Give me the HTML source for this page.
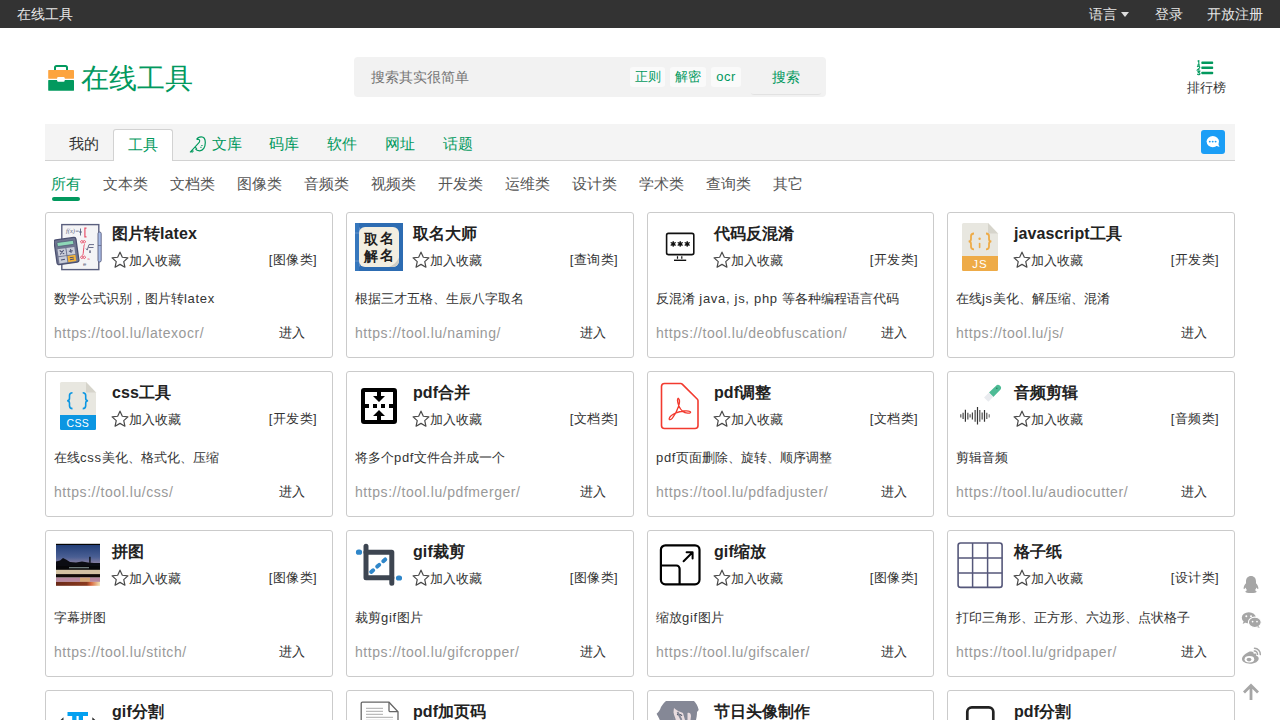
<!DOCTYPE html>
<html><head><meta charset="utf-8"><title>在线工具</title><style>
*{margin:0;padding:0;box-sizing:border-box}
html,body{width:1280px;height:720px;overflow:hidden;background:#fff}
body{font-family:"Liberation Sans",sans-serif;color:#333;position:relative}
.abs{position:absolute;white-space:nowrap}
.top{position:absolute;left:0;top:0;width:1280px;height:28px;background:#333;color:#e6e6e6;font-size:14px}
.top span{position:absolute;top:0;line-height:28px}
.caret{position:absolute;left:1121px;top:12px;width:0;height:0;border-left:4.5px solid transparent;border-right:4.5px solid transparent;border-top:5px solid #ddd}
.logo{position:absolute;left:48px;top:65px}
.logotext{position:absolute;left:81px;top:60px;font-size:28px;line-height:38px;color:#02995e;white-space:nowrap}
.search{position:absolute;left:354px;top:57px;width:472px;height:40px;background:#f2f2f2;border-radius:4px}
.ph{position:absolute;left:17px;top:0;line-height:40px;font-size:14px;color:#757575}
.tag{position:absolute;top:10px;height:20px;line-height:20px;background:#fafafa;border-radius:3px;color:#02995e;font-size:13px;text-align:center}
.sbtn{position:absolute;left:396px;top:0;width:72px;height:37px;line-height:40px;text-align:center;color:#02995e;font-size:14px;box-shadow:0 2px 1px -1px rgba(0,0,0,.07);border-radius:4px}
.rank{position:absolute;left:1186px;top:59px;width:40px;text-align:center;font-size:13px;color:#333}
.tabs{position:absolute;left:45px;top:124px;width:1190px;height:37px;background:#f4f4f4;border-bottom:1px solid #d2d2d2}
.tab{position:absolute;top:0;line-height:40px;font-size:15px;color:#02995e;white-space:nowrap}
.tab.act{top:5px;height:32px;line-height:30px;background:#fff;border:1px solid #d2d2d2;border-bottom:none;border-radius:3px 3px 0 0;width:60px;text-align:center}
.chat{position:absolute;left:1156px;top:6px;width:24px;height:24px;background:#1b9ef6;border-radius:3px}
.cats span{position:absolute;top:174px;font-size:15px;line-height:20px;color:#555;white-space:nowrap}
.uline{position:absolute;left:52px;top:197px;width:28px;height:4px;border-radius:2px;background:#02995e}
.card{position:absolute;width:288px;border:1px solid #cbcbcb;border-radius:3px;background:#fff;overflow:hidden}
.card .ic{position:absolute;left:8px;top:10px;width:48px;height:48px}
.card .ic svg{display:block}
.tt{position:absolute;left:66px;top:9px;font-size:16px;font-weight:700;line-height:24px;color:#222;white-space:nowrap}
.fav{position:absolute;left:65px;top:38px;height:20px;font-size:13px;line-height:20px;color:#333;white-space:nowrap}
.fav .star{position:absolute;left:-1px;top:-1px}
.fav span{position:absolute;left:18px;top:0}
.cat{position:absolute;right:15px;top:36px;font-size:13px;line-height:22px;color:#333;white-space:nowrap;letter-spacing:.4px}
.ds{position:absolute;left:8px;top:76px;font-size:13px;line-height:20px;color:#333;white-space:nowrap}
.url{position:absolute;left:8px;top:110px;font-size:14px;line-height:20px;color:#999;letter-spacing:.56px;white-space:nowrap}
.go{position:absolute;left:233px;top:110px;font-size:13px;line-height:20px;color:#333}
.l{letter-spacing:.1px}
.ds .l{letter-spacing:.7px}
.side{position:absolute;left:1242px;width:18px;height:18px}
</style></head>
<body>
<div class="top"><span style="left:17px">在线工具</span><span style="left:1089px">语言</span><i class="caret"></i><span style="left:1155px">登录</span><span style="left:1207px">开放注册</span></div>
<div class="logo"><svg width="26" height="26" viewBox="0 0 26 26">
<path d="M7 5V2.6A1.6 1.6 0 0 1 8.6 1h8.8A1.6 1.6 0 0 1 19 2.6V5" fill="none" stroke="#02995e" stroke-width="2"/>
<rect x="0.2" y="5" width="25.8" height="8.7" rx=".4" fill="#fda43f"/>
<rect x="0.2" y="15" width="25.8" height="10.7" rx=".4" fill="#02995e"/>
<rect x="9.1" y="12.1" width="7.6" height="4.7" rx="1.2" fill="#fff"/>
</svg></div>
<div class="logotext">在线工具</div>
<div class="search"><span class="ph">搜索其实很简单</span>
<span class="tag" style="left:276px;width:35px">正则</span>
<span class="tag" style="left:316px;width:36px">解密</span>
<span class="tag" style="left:357px;width:30px;letter-spacing:.5px">ocr</span>
<span class="sbtn">搜索</span></div>
<div class="rank"><svg width="18" height="16" viewBox="0 0 18 16" style="position:absolute;left:10px;top:1px">
<g fill="#02995e"><rect x="5.3" y="1.6" width="11.9" height="2.5" rx=".8"/><rect x="5.3" y="6.6" width="11.9" height="2.5" rx=".8"/><rect x="5.3" y="11.7" width="11.9" height="2.5" rx=".8"/></g>
<g fill="none" stroke="#02995e" stroke-width="1.1"><path d="M1.6 1.3l1.2-.6v4.4M1.3 5.1h2.6"/><path d="M1.2 6.9c.4-.8 2.6-.9 2.6.4 0 .9-1.6 1.6-2.6 2.7h2.7"/><path d="M1.2 11.2h2.5l-1.3 1.4c1.2 0 1.6.5 1.6 1.1 0 1-1.6 1.3-2.8.6"/></g></svg>
<div style="position:absolute;left:0;top:21px;width:40px;line-height:16px">排行榜</div></div>
<div class="tabs">
<span class="tab" style="left:24px;color:#333">我的</span>
<span class="tab act" style="left:68px">工具</span>
<span class="tab" style="left:144px"><svg width="18" height="18" viewBox="0 0 18 18" style="position:absolute;left:0;top:12px"><path d="M7.8 3.2c.8-1.6 2.4-2.4 4.4-2.4 2.6 0 4.1 2.4 4.1 5.8 0 4.6-2.2 8.2-5.6 8.2-2 0-3.6-.8-4.3-2.1" fill="none" stroke="#02995e" stroke-width="1.2"/><path d="M7.6 3.4h2.2c1 .4 1.2 1.6.4 3L4.5 12.6 1 16.3M3 14l1.5 1.5M2 15l1.5 1.5M6.3 11.2l1.6 1.6" fill="none" stroke="#02995e" stroke-width="1.1"/><path d="M12.3 9.5h1.3M11.3 11.3h1.3" stroke="#02995e" stroke-width="1"/></svg><span style="padding-left:23px">文库</span></span>
<span class="tab" style="left:224px">码库</span>
<span class="tab" style="left:282px">软件</span>
<span class="tab" style="left:340px">网址</span>
<span class="tab" style="left:398px">话题</span>
<div class="chat"><svg width="24" height="24" viewBox="0 0 24 24"><ellipse cx="11.8" cy="11.6" rx="6.2" ry="5.6" fill="#fff"/><path d="M14.5 15.5l4 1.6-1.6-4z" fill="#fff"/><circle cx="8.8" cy="11.6" r=".95" fill="#1b9ef6"/><circle cx="11.7" cy="11.6" r=".95" fill="#1b9ef6"/><circle cx="14.6" cy="11.6" r=".95" fill="#1b9ef6"/></svg></div>
</div>
<div class="cats">
<span style="left:51px;color:#02995e">所有</span>
<span style="left:103px">文本类</span><span style="left:170px">文档类</span><span style="left:237px">图像类</span><span style="left:304px">音频类</span><span style="left:371px">视频类</span><span style="left:438px">开发类</span><span style="left:505px">运维类</span><span style="left:572px">设计类</span><span style="left:639px">学术类</span><span style="left:706px">查询类</span><span style="left:773px">其它</span>
</div>
<div class="uline"></div>
<div class="card" style="left:45px;top:212px;width:288px;height:146px"><div style="position:absolute;left:0;top:0;width:100%;height:100%">
<div class="ic ic-latex"><svg width="48" height="48" viewBox="0 0 48 48">
<rect x="7.8" y="1.6" width="37" height="45" fill="#f4f4f6" stroke="#5a5f7e" stroke-width="1.4"/>
<text x="12" y="10" font-size="6.5" fill="#666a84" font-family="Liberation Serif" font-style="italic">f(x)=</text>
<path d="M26.5 5.5v7M25 9h3" stroke="#5a5f7e" stroke-width=".9"/>
<path d="M32.5 5.2h-1.6v8.6h1.6" stroke="#e8506a" stroke-width="1.2" fill="none"/>
<path d="M29 18.7a1.2 1.2 0 1 0 0 .1zM31.5 18.7a1.2 1.2 0 1 0 0 .1zM29 34.3a1.2 1.2 0 1 0 0 .1zM31.5 34.3a1.2 1.2 0 1 0 0 .1z" fill="none" stroke="#e8506a" stroke-width="1"/>
<path d="M31 21.5c-1 0-1 1-1.2 3l-.6 6c-.2 1.5-.5 2-1.3 2" fill="none" stroke="#e8506a" stroke-width="1"/>
<path d="M32 25.5l1.2 1.6 1.8-5.5h5M34.5 24.5h5M36 27v3M35 29h2" stroke="#5a5f7e" stroke-width=".9" fill="none"/>
<text x="33.5" y="37" font-size="4" fill="#e8506a">a</text>
<text x="29" y="43" font-size="6" fill="#5a5f7e">e</text>
<rect x="44" y="9" width="3.2" height="30" rx="1.6" fill="#a9bde8" stroke="#5a5f7e" stroke-width=".9"/>
<path d="M44 22.5h3.2" stroke="#5a5f7e" stroke-width=".7"/>
<g transform="rotate(-8 13 28)">
<rect x="1.5" y="15.5" width="22" height="25" rx="2" fill="#6f7590" stroke="#4b5070" stroke-width="1.3"/>
<rect x="4.2" y="18.3" width="16.5" height="4" rx=".6" fill="#8fd8b8" stroke="#4b5070" stroke-width=".6"/>
<rect x="3.8" y="25" width="8" height="7" fill="#c9cdd9"/>
<rect x="12.8" y="25" width="8" height="7" fill="#c9cdd9"/>
<rect x="3.8" y="33" width="8" height="6.3" fill="#c9cdd9"/>
<rect x="12.8" y="33" width="8" height="6.3" fill="#f3b43c"/>
<path d="M5.8 26.5l4 4M9.8 26.5l-4 4M14.8 28.5h4M16.8 26.5v4M5.8 36h4M14.8 35h4M14.8 37h4" stroke="#4b5070" stroke-width="1"/>
</g></svg></div>
<div class="tt">图片转<span class="l">latex</span></div>
<div class="fav"><svg class="star" width="20" height="20" viewBox="0 0 24 24"><path d="M12 2.6l2.8 6.1 6.7.75-5 4.55 1.4 6.6L12 17.25 6.1 20.6l1.4-6.6-5-4.55 6.7-.75z" fill="none" stroke="#4a4a4a" stroke-width="1.45" stroke-linejoin="round"/></svg><span>加入收藏</span></div>
<div class="cat">[图像类]</div>
<div style="position:absolute;left:0;top:0px;width:100%;height:100%">
<div class="ds">数学公式识别，图片转<span class="l">latex</span></div>
<div class="url">https://tool.lu/latexocr/</div>
<div class="go">进入</div></div>
</div></div><div class="card" style="left:346px;top:212px;width:288px;height:146px"><div style="position:absolute;left:0;top:0;width:100%;height:100%">
<div class="ic ic-naming"><svg width="48" height="48" viewBox="0 0 48 48">
<rect width="48" height="48" fill="#2d6cb2"/>
<rect x="0" y="0" width="4" height="48" fill="#3677bd"/>
<path d="M4.5 4.5v39M0 10h4M0 38h4" stroke="#8fa6d2" stroke-width=".6"/>
<rect x="4" y="4" width="40" height="40" rx="6" fill="#f2eee1"/>
<path d="M34 44c4-1.5 8-5 10-9.5V38c0 3-3 6-6 6z" fill="#cfcdc4"/>
<text x="8.5" y="21" font-size="14" font-weight="700" fill="#1e1e1e" font-family="Liberation Serif">取</text>
<text x="25" y="20" font-size="14" font-weight="700" fill="#1e1e1e" font-family="Liberation Serif">名</text>
<text x="8.5" y="37.5" font-size="14" font-weight="700" fill="#1e1e1e" font-family="Liberation Serif">解</text>
<text x="25" y="36.5" font-size="14" font-weight="700" fill="#1e1e1e" font-family="Liberation Serif">名</text>
</svg></div>
<div class="tt">取名大师</div>
<div class="fav"><svg class="star" width="20" height="20" viewBox="0 0 24 24"><path d="M12 2.6l2.8 6.1 6.7.75-5 4.55 1.4 6.6L12 17.25 6.1 20.6l1.4-6.6-5-4.55 6.7-.75z" fill="none" stroke="#4a4a4a" stroke-width="1.45" stroke-linejoin="round"/></svg><span>加入收藏</span></div>
<div class="cat">[查询类]</div>
<div style="position:absolute;left:0;top:0px;width:100%;height:100%">
<div class="ds">根据三才五格、生辰八字取名</div>
<div class="url">https://tool.lu/naming/</div>
<div class="go">进入</div></div>
</div></div><div class="card" style="left:647px;top:212px;width:287px;height:146px"><div style="position:absolute;left:0;top:0;width:100%;height:100%">
<div class="ic ic-monitor"><svg width="48" height="48" viewBox="0 0 48 48">
<rect x="10.6" y="10.4" width="27.2" height="21.2" rx="1.8" fill="none" stroke="#111" stroke-width="1.6"/>
<g stroke="#111" stroke-width="1.3" stroke-linecap="round">
<path d="M17.2 18.6v4.6M15.2 19.7l4 2.4M15.2 22.1l4-2.4"/>
<path d="M24.2 18.6v4.6M22.2 19.7l4 2.4M22.2 22.1l4-2.4"/>
<path d="M31.2 18.6v4.6M29.2 19.7l4 2.4M29.2 22.1l4-2.4"/>
</g>
<g fill="#111"><circle cx="17.2" cy="20.9" r="1.4"/><circle cx="24.2" cy="20.9" r="1.4"/><circle cx="31.2" cy="20.9" r="1.4"/></g>
<path d="M21.5 33.2v2.6M25.8 33.2v2.6" stroke="#111" stroke-width="1.2"/>
<path d="M18 37.3h12.2" stroke="#111" stroke-width="1.4"/>
</svg></div>
<div class="tt">代码反混淆</div>
<div class="fav"><svg class="star" width="20" height="20" viewBox="0 0 24 24"><path d="M12 2.6l2.8 6.1 6.7.75-5 4.55 1.4 6.6L12 17.25 6.1 20.6l1.4-6.6-5-4.55 6.7-.75z" fill="none" stroke="#4a4a4a" stroke-width="1.45" stroke-linejoin="round"/></svg><span>加入收藏</span></div>
<div class="cat">[开发类]</div>
<div style="position:absolute;left:0;top:0px;width:100%;height:100%">
<div class="ds">反混淆<span class="l"> java, js, php </span>等各种编程语言代码</div>
<div class="url">https://tool.lu/deobfuscation/</div>
<div class="go">进入</div></div>
</div></div><div class="card" style="left:947px;top:212px;width:288px;height:146px"><div style="position:absolute;left:0;top:0;width:100%;height:100%">
<div class="ic ic-js"><svg width="48" height="48" viewBox="0 0 48 48">
<path d="M6 1.5a1.5 1.5 0 0 1 1.5-1.5H32l10 10.5V46.5a1.5 1.5 0 0 1-1.5 1.5h-33A1.5 1.5 0 0 1 6 46.5z" fill="#e8e7e0"/>
<path d="M32 0l10 10.5H32z" fill="#d6d4cb"/>
<path d="M6 33h36v13.5a1.5 1.5 0 0 1-1.5 1.5h-33A1.5 1.5 0 0 1 6 46.5z" fill="#eeab47"/>
<path d="M18 10.5c-2 0-3 1-3 2.8v2.6c0 1.5-.8 2.5-2.4 2.5 1.6 0 2.4 1 2.4 2.5v2.6c0 1.8 1 2.8 3 2.8M30 10.5c2 0 3 1 3 2.8v2.6c0 1.5.8 2.5 2.4 2.5-1.6 0-2.4 1-2.4 2.5v2.6c0 1.8-1 2.8-3 2.8" fill="none" stroke="#eeab47" stroke-width="1.8"/><circle cx="23.6" cy="15.8" r="1.2" fill="#eeab47"/><path d="M23.6 20.6v3.8" stroke="#eeab47" stroke-width="1.6" stroke-linecap="round"/>
<text x="24" y="45" font-size="11.5" fill="#fff" text-anchor="middle" font-family="Liberation Sans" letter-spacing="1">JS</text>
</svg></div>
<div class="tt"><span class="l">javascript</span>工具</div>
<div class="fav"><svg class="star" width="20" height="20" viewBox="0 0 24 24"><path d="M12 2.6l2.8 6.1 6.7.75-5 4.55 1.4 6.6L12 17.25 6.1 20.6l1.4-6.6-5-4.55 6.7-.75z" fill="none" stroke="#4a4a4a" stroke-width="1.45" stroke-linejoin="round"/></svg><span>加入收藏</span></div>
<div class="cat">[开发类]</div>
<div style="position:absolute;left:0;top:0px;width:100%;height:100%">
<div class="ds">在线<span class="l">js</span>美化、解压缩、混淆</div>
<div class="url">https://tool.lu/js/</div>
<div class="go">进入</div></div>
</div></div><div class="card" style="left:45px;top:371px;width:288px;height:146px"><div style="position:absolute;left:0;top:0;width:100%;height:100%">
<div class="ic ic-css"><svg width="48" height="48" viewBox="0 0 48 48">
<path d="M6 1.5a1.5 1.5 0 0 1 1.5-1.5H32l10 10.5V46.5a1.5 1.5 0 0 1-1.5 1.5h-33A1.5 1.5 0 0 1 6 46.5z" fill="#e8e7e0"/>
<path d="M32 0l10 10.5H32z" fill="#d6d4cb"/>
<path d="M6 33h36v13.5a1.5 1.5 0 0 1-1.5 1.5h-33A1.5 1.5 0 0 1 6 46.5z" fill="#0b96e2"/>
<path d="M18.5 10.8c-2 0-3 1-3 2.8v2.6c0 1.5-.8 2.5-2.4 2.5 1.6 0 2.4 1 2.4 2.5v2.6c0 1.8 1 2.8 3 2.8M28.7 10.8c2 0 3 1 3 2.8v2.6c0 1.5.8 2.5 2.4 2.5-1.6 0-2.4 1-2.4 2.5v2.6c0 1.8-1 2.8-3 2.8" fill="none" stroke="#0b96e2" stroke-width="1.6"/>
<text x="23.8" y="45" font-size="10.5" fill="#fff" text-anchor="middle" font-family="Liberation Sans" letter-spacing="0.3">CSS</text>
</svg></div>
<div class="tt"><span class="l">css</span>工具</div>
<div class="fav"><svg class="star" width="20" height="20" viewBox="0 0 24 24"><path d="M12 2.6l2.8 6.1 6.7.75-5 4.55 1.4 6.6L12 17.25 6.1 20.6l1.4-6.6-5-4.55 6.7-.75z" fill="none" stroke="#4a4a4a" stroke-width="1.45" stroke-linejoin="round"/></svg><span>加入收藏</span></div>
<div class="cat">[开发类]</div>
<div style="position:absolute;left:0;top:0px;width:100%;height:100%">
<div class="ds">在线<span class="l">css</span>美化、格式化、压缩</div>
<div class="url">https://tool.lu/css/</div>
<div class="go">进入</div></div>
</div></div><div class="card" style="left:346px;top:371px;width:288px;height:146px"><div style="position:absolute;left:0;top:0;width:100%;height:100%">
<div class="ic ic-merge"><svg width="48" height="48" viewBox="0 0 48 48">
<rect x="8" y="8" width="32" height="32" rx="1" fill="none" stroke="#000" stroke-width="4"/>
<path d="M22 10h4v4h4l-6 6-6-6h4z" fill="#000"/>
<path d="M22 38h4v-4h4l-6-6-6 6h4z" fill="#000"/>
<path d="M10 22h4v4h-4zM18 22h4v4h-4zM26 22h4v4h-4zM34 22h4v4h-4z" fill="#000"/>
</svg></div>
<div class="tt"><span class="l">pdf</span>合并</div>
<div class="fav"><svg class="star" width="20" height="20" viewBox="0 0 24 24"><path d="M12 2.6l2.8 6.1 6.7.75-5 4.55 1.4 6.6L12 17.25 6.1 20.6l1.4-6.6-5-4.55 6.7-.75z" fill="none" stroke="#4a4a4a" stroke-width="1.45" stroke-linejoin="round"/></svg><span>加入收藏</span></div>
<div class="cat">[文档类]</div>
<div style="position:absolute;left:0;top:0px;width:100%;height:100%">
<div class="ds">将多个<span class="l">pdf</span>文件合并成一个</div>
<div class="url">https://tool.lu/pdfmerger/</div>
<div class="go">进入</div></div>
</div></div><div class="card" style="left:647px;top:371px;width:287px;height:146px"><div style="position:absolute;left:0;top:0;width:100%;height:100%">
<div class="ic ic-pdf"><svg width="48" height="48" viewBox="0 0 48 48">
<path d="M8.5 1.5h16.3a2 2 0 0 1 1.4.6l15.2 15.2a2 2 0 0 1 .6 1.4V43.5a3 3 0 0 1-3 3H8.5a3 3 0 0 1-3-3v-39a3 3 0 0 1 3-3z" fill="none" stroke="#f23a2f" stroke-width="1.6"/>
<path d="M22.2 16.2c-.9.6-.6 4.3.7 7.7 1.8 4.2 4.8 6.8 8.8 7.2 2.4.2 3.7-.8 2.3-1.6-2.5-1.3-9.5-.5-14 1.4-4.2 1.8-6.5 4.3-6.8 5.8-.3 1.4 1.6 1.3 3.2-.6 2.2-2.7 4.8-7.6 6.2-11.8 1-3.1 1.4-7-.4-8.1z" fill="none" stroke="#f23a2f" stroke-width="1.3"/>
</svg></div>
<div class="tt"><span class="l">pdf</span>调整</div>
<div class="fav"><svg class="star" width="20" height="20" viewBox="0 0 24 24"><path d="M12 2.6l2.8 6.1 6.7.75-5 4.55 1.4 6.6L12 17.25 6.1 20.6l1.4-6.6-5-4.55 6.7-.75z" fill="none" stroke="#4a4a4a" stroke-width="1.45" stroke-linejoin="round"/></svg><span>加入收藏</span></div>
<div class="cat">[文档类]</div>
<div style="position:absolute;left:0;top:0px;width:100%;height:100%">
<div class="ds"><span class="l">pdf</span>页面删除、旋转、顺序调整</div>
<div class="url">https://tool.lu/pdfadjuster/</div>
<div class="go">进入</div></div>
</div></div><div class="card" style="left:947px;top:371px;width:288px;height:146px"><div style="position:absolute;left:0;top:0;width:100%;height:100%">
<div class="ic ic-audio"><svg width="48" height="48" viewBox="0 0 48 48">
<path d="M33 10.5l6.8-6.6a3 3 0 0 1 4.3 4.2l-6.8 6.8z" fill="#4dbb95"/>
<circle cx="40.8" cy="6.3" r=".8" fill="#2a7a5e"/>
<path d="M28 15.5l5-5 4.3 4.3-5 5z" fill="#e9ebef"/>
<path d="M4.8 32.3V35.4" stroke="#555" stroke-width="1.2"/><path d="M7.1 30.8V37" stroke="#444" stroke-width="1.2"/><path d="M9.4 27.7V39.7" stroke="#333" stroke-width="1.2"/><path d="M11.8 30.8V37.4" stroke="#777" stroke-width="1.6"/><path d="M14.1 32.3V35.4" stroke="#555" stroke-width="1.2"/><path d="M16.4 30.4V37.4" stroke="#444" stroke-width="1.2"/><path d="M19.2 28V39.7" stroke="#777" stroke-width="1.7"/><path d="M21.5 25V42.4" stroke="#333" stroke-width="1.2"/><path d="M23.8 28V39.7" stroke="#555" stroke-width="1.2"/><path d="M26.2 30.4V37.4" stroke="#777" stroke-width="1.6"/><path d="M28.5 28V39.7" stroke="#333" stroke-width="1.2"/><path d="M30.8 30.8V37" stroke="#555" stroke-width="1.2"/><path d="M33.2 32.3V35.4" stroke="#777" stroke-width="1.2"/>
</svg></div>
<div class="tt">音频剪辑</div>
<div class="fav"><svg class="star" width="20" height="20" viewBox="0 0 24 24"><path d="M12 2.6l2.8 6.1 6.7.75-5 4.55 1.4 6.6L12 17.25 6.1 20.6l1.4-6.6-5-4.55 6.7-.75z" fill="none" stroke="#4a4a4a" stroke-width="1.45" stroke-linejoin="round"/></svg><span>加入收藏</span></div>
<div class="cat">[音频类]</div>
<div style="position:absolute;left:0;top:0px;width:100%;height:100%">
<div class="ds">剪辑音频</div>
<div class="url">https://tool.lu/audiocutter/</div>
<div class="go">进入</div></div>
</div></div><div class="card" style="left:45px;top:530px;width:288px;height:147px"><div style="position:absolute;left:0;top:0;width:100%;height:100%">
<div class="ic ic-stitch"><svg width="48" height="48" viewBox="0 0 48 48">
<defs><linearGradient id="sky" x1="0" y1="0" x2="0" y2="1"><stop offset="0" stop-color="#233f78"/><stop offset="0.55" stop-color="#4a5f94"/><stop offset="0.85" stop-color="#8a7fa0"/><stop offset="1" stop-color="#b08a98"/></linearGradient>
<linearGradient id="s4" x1="0" y1="0" x2="1" y2="0"><stop offset="0" stop-color="#6a2a18"/><stop offset="0.7" stop-color="#8a3a1e"/><stop offset="0.8" stop-color="#d86a40"/><stop offset="1" stop-color="#f2e6b8"/></linearGradient></defs>
<rect x="2" y="2.8" width="44" height="1.2" fill="#050505"/>
<rect x="2" y="4" width="44" height="22" fill="url(#sky)"/>
<path d="M2 20.5l4-1 3-2.5 3 1.5 4 2.5 6 0.5 6-1 6 1 6 .5 6 0v7H2z" fill="#0b0c12"/>
<rect x="35.2" y="15.8" width="1.4" height="6" fill="#0b0c12"/>
<rect x="2" y="25" width="44" height="3.8" fill="#070709"/>
<rect x="15" y="26.3" width="20" height=".9" fill="#9aa"/>
<rect x="2" y="28.8" width="44" height="4.3" fill="#d3c2a2"/>
<rect x="2" y="33.1" width="44" height="3.5" fill="#120b06"/>
<rect x="2" y="36.6" width="44" height="4.3" fill="#b98aa0"/>
<rect x="26" y="36.6" width="10" height="4.3" fill="#d5a878"/>
<rect x="2" y="40.9" width="44" height="3.9" fill="url(#s4)"/>
</svg></div>
<div class="tt">拼图</div>
<div class="fav"><svg class="star" width="20" height="20" viewBox="0 0 24 24"><path d="M12 2.6l2.8 6.1 6.7.75-5 4.55 1.4 6.6L12 17.25 6.1 20.6l1.4-6.6-5-4.55 6.7-.75z" fill="none" stroke="#4a4a4a" stroke-width="1.45" stroke-linejoin="round"/></svg><span>加入收藏</span></div>
<div class="cat">[图像类]</div>
<div style="position:absolute;left:0;top:1px;width:100%;height:100%">
<div class="ds">字幕拼图</div>
<div class="url">https://tool.lu/stitch/</div>
<div class="go">进入</div></div>
</div></div><div class="card" style="left:346px;top:530px;width:288px;height:147px"><div style="position:absolute;left:0;top:0;width:100%;height:100%">
<div class="ic ic-crop"><svg width="48" height="48" viewBox="0 0 48 48">
<path d="M11 5.3V36.8H36.8" fill="none" stroke="#3d4551" stroke-width="5" stroke-linecap="round" stroke-linejoin="round"/>
<path d="M11 11.2H36.8V42.3" fill="none" stroke="#3d4551" stroke-width="5" stroke-linecap="round" stroke-linejoin="round"/>
<path d="M3.5 11.2h1M43.5 37h1" stroke="#2f86c9" stroke-width="5.2" stroke-linecap="round"/>
<path d="M16.2 31L33 16" stroke="#2f86c9" stroke-width="4" stroke-linecap="round" stroke-dasharray="2.6 5.5"/>
</svg></div>
<div class="tt"><span class="l">gif</span>裁剪</div>
<div class="fav"><svg class="star" width="20" height="20" viewBox="0 0 24 24"><path d="M12 2.6l2.8 6.1 6.7.75-5 4.55 1.4 6.6L12 17.25 6.1 20.6l1.4-6.6-5-4.55 6.7-.75z" fill="none" stroke="#4a4a4a" stroke-width="1.45" stroke-linejoin="round"/></svg><span>加入收藏</span></div>
<div class="cat">[图像类]</div>
<div style="position:absolute;left:0;top:1px;width:100%;height:100%">
<div class="ds">裁剪<span class="l">gif</span>图片</div>
<div class="url">https://tool.lu/gifcropper/</div>
<div class="go">进入</div></div>
</div></div><div class="card" style="left:647px;top:530px;width:287px;height:147px"><div style="position:absolute;left:0;top:0;width:100%;height:100%">
<div class="ic ic-scale"><svg width="48" height="48" viewBox="0 0 48 48">
<rect x="4.9" y="4.3" width="38.6" height="39" rx="4.5" fill="none" stroke="#000" stroke-width="2.2"/>
<path d="M4.9 24.5h15.5a3.2 3.2 0 0 1 3.2 3.2v15.6" fill="none" stroke="#000" stroke-width="2.2"/>
<path d="M27.6 20.3l9-9M30.6 11.3h6v6.3" fill="none" stroke="#000" stroke-width="2" stroke-linecap="round" stroke-linejoin="round"/>
</svg></div>
<div class="tt"><span class="l">gif</span>缩放</div>
<div class="fav"><svg class="star" width="20" height="20" viewBox="0 0 24 24"><path d="M12 2.6l2.8 6.1 6.7.75-5 4.55 1.4 6.6L12 17.25 6.1 20.6l1.4-6.6-5-4.55 6.7-.75z" fill="none" stroke="#4a4a4a" stroke-width="1.45" stroke-linejoin="round"/></svg><span>加入收藏</span></div>
<div class="cat">[图像类]</div>
<div style="position:absolute;left:0;top:1px;width:100%;height:100%">
<div class="ds">缩放<span class="l">gif</span>图片</div>
<div class="url">https://tool.lu/gifscaler/</div>
<div class="go">进入</div></div>
</div></div><div class="card" style="left:947px;top:530px;width:288px;height:147px"><div style="position:absolute;left:0;top:0;width:100%;height:100%">
<div class="ic ic-grid"><svg width="48" height="48" viewBox="0 0 48 48">
<rect x="2.1" y="2" width="44" height="44.4" rx="2.5" fill="none" stroke="#55577a" stroke-width="1.6"/>
<path d="M16.6 2v44.4M31.6 2v44.4M2.1 17h44M2.1 32h44" stroke="#55577a" stroke-width="1.5"/>
</svg></div>
<div class="tt">格子纸</div>
<div class="fav"><svg class="star" width="20" height="20" viewBox="0 0 24 24"><path d="M12 2.6l2.8 6.1 6.7.75-5 4.55 1.4 6.6L12 17.25 6.1 20.6l1.4-6.6-5-4.55 6.7-.75z" fill="none" stroke="#4a4a4a" stroke-width="1.45" stroke-linejoin="round"/></svg><span>加入收藏</span></div>
<div class="cat">[设计类]</div>
<div style="position:absolute;left:0;top:1px;width:100%;height:100%">
<div class="ds">打印三角形、正方形、六边形、点状格子</div>
<div class="url">https://tool.lu/gridpaper/</div>
<div class="go">进入</div></div>
</div></div><div class="card" style="left:45px;top:690px;width:288px;height:146px"><div style="position:absolute;left:0;top:0;width:100%;height:100%">
<div class="ic ic-split"><svg width="48" height="48" viewBox="0 0 48 48">
<path d="M13.5 11h20.5v4h-5v20h-4.3V15h-2.2v20h-4.3V15h-4.7z" fill="#03a0f0"/>
<path d="M9.5 16.2l-3.5 3.3 3.5 3.3zM38.3 16.2l3.6 3.3-3.6 3.3z" fill="#333"/>
</svg></div>
<div class="tt"><span class="l">gif</span>分割</div>
<div class="fav"><svg class="star" width="20" height="20" viewBox="0 0 24 24"><path d="M12 2.6l2.8 6.1 6.7.75-5 4.55 1.4 6.6L12 17.25 6.1 20.6l1.4-6.6-5-4.55 6.7-.75z" fill="none" stroke="#4a4a4a" stroke-width="1.45" stroke-linejoin="round"/></svg><span>加入收藏</span></div>
<div class="cat">[图像类]</div>
<div style="position:absolute;left:0;top:0px;width:100%;height:100%">
<div class="ds"></div>
<div class="url"></div>
<div class="go">进入</div></div>
</div></div><div class="card" style="left:346px;top:690px;width:288px;height:146px"><div style="position:absolute;left:0;top:0;width:100%;height:100%">
<div class="ic ic-pagenum"><svg width="48" height="48" viewBox="0 0 48 48">
<path d="M6.2 2.5a1.3 1.3 0 0 1 1.3-1.3H34l9 9.5V48H6.2z" fill="#fff" stroke="#666" stroke-width="1.3"/>
<path d="M34 1.2v8.3a1.2 1.2 0 0 0 1.2 1.2H43" fill="none" stroke="#666" stroke-width="1.3"/>
<path d="M11 7.3h17M11 10.3h17M11 13.3h17M11 16.3h27M11 19.3h27" stroke="#bbb" stroke-width="1.3"/>
</svg></div>
<div class="tt"><span class="l">pdf</span>加页码</div>
<div class="fav"><svg class="star" width="20" height="20" viewBox="0 0 24 24"><path d="M12 2.6l2.8 6.1 6.7.75-5 4.55 1.4 6.6L12 17.25 6.1 20.6l1.4-6.6-5-4.55 6.7-.75z" fill="none" stroke="#4a4a4a" stroke-width="1.45" stroke-linejoin="round"/></svg><span>加入收藏</span></div>
<div class="cat">[文档类]</div>
<div style="position:absolute;left:0;top:0px;width:100%;height:100%">
<div class="ds"></div>
<div class="url"></div>
<div class="go">进入</div></div>
</div></div><div class="card" style="left:647px;top:690px;width:287px;height:146px"><div style="position:absolute;left:0;top:0;width:100%;height:100%">
<div class="ic ic-avatar"><svg width="48" height="48" viewBox="0 0 48 48">
<path d="M10 0H38C40 2 42 5 42.7 9L41 11C41 14 40.5 17 40 19H3.8C3 17 1.5 14.5 .6 12.8 2.5 11.5 4 9 5 6 7 3 8.5 1 10 0z" fill="#858896"/>
<path d="M18 7C20 9 24 11 27 12L29 19H18C17 15 17.5 10 18 7z" fill="#e9dcdf"/>
<path d="M31.5 12C33 11 35 12 35 15L34.5 19H31.5z" fill="#e9dcdf"/>
<path d="M21 13.6C23 13 25 13.5 26 14.6" stroke="#4f5466" stroke-width="1.3" fill="none"/>
<path d="M21.5 11L25.5 19M16.5 12L19 19" stroke="#858896" stroke-width="1.8"/>
</svg></div>
<div class="tt">节日头像制作</div>
<div class="fav"><svg class="star" width="20" height="20" viewBox="0 0 24 24"><path d="M12 2.6l2.8 6.1 6.7.75-5 4.55 1.4 6.6L12 17.25 6.1 20.6l1.4-6.6-5-4.55 6.7-.75z" fill="none" stroke="#4a4a4a" stroke-width="1.45" stroke-linejoin="round"/></svg><span>加入收藏</span></div>
<div class="cat">[图像类]</div>
<div style="position:absolute;left:0;top:0px;width:100%;height:100%">
<div class="ds"></div>
<div class="url"></div>
<div class="go">进入</div></div>
</div></div><div class="card" style="left:947px;top:690px;width:288px;height:146px"><div style="position:absolute;left:0;top:0;width:100%;height:100%">
<div class="ic ic-pdfsplit"><svg width="48" height="48" viewBox="0 0 48 48">
<rect x="11.3" y="6.3" width="26" height="30" rx="4.5" fill="none" stroke="#222" stroke-width="2.7"/>
</svg></div>
<div class="tt"><span class="l">pdf</span>分割</div>
<div class="fav"><svg class="star" width="20" height="20" viewBox="0 0 24 24"><path d="M12 2.6l2.8 6.1 6.7.75-5 4.55 1.4 6.6L12 17.25 6.1 20.6l1.4-6.6-5-4.55 6.7-.75z" fill="none" stroke="#4a4a4a" stroke-width="1.45" stroke-linejoin="round"/></svg><span>加入收藏</span></div>
<div class="cat">[文档类]</div>
<div style="position:absolute;left:0;top:0px;width:100%;height:100%">
<div class="ds"></div>
<div class="url"></div>
<div class="go">进入</div></div>
</div></div>
<div class="side" style="left:1241px;top:575px;width:20px;height:19px"><svg width="20" height="19" viewBox="0 0 20 19"><path d="M10 1C6.8 1 5 3.3 5 6.5v1.8C3.8 9.6 2.6 11.6 2.6 13.2c0 .9.5 1 1.2.2l.7-.8c.3 1.1.9 2 1.6 2.6-1.1.4-1.7 1-1.7 1.5 0 .9 2.2 1.3 5.6 1.3s5.6-.4 5.6-1.3c0-.5-.6-1.1-1.7-1.5.7-.6 1.3-1.5 1.6-2.6l.7.8c.7.8 1.2.7 1.2-.2 0-1.6-1.2-3.6-2.4-4.9V6.5C15 3.3 13.2 1 10 1z" fill="#a6a6a6"/></svg></div>
<div class="side" style="left:1241px;top:611px;width:21px;height:18px"><svg width="21" height="18" viewBox="0 0 21 18"><ellipse cx="7.8" cy="6.8" rx="7" ry="5.6" fill="#a6a6a6"/><path d="M2.5 10.5l-.8 2.5 3-1.5z" fill="#a6a6a6"/><ellipse cx="13.8" cy="11.3" rx="6.4" ry="5.2" fill="#a6a6a6" stroke="#fff" stroke-width="1.1"/><path d="M17.5 15l1.3 2-2.8-1z" fill="#a6a6a6"/><circle cx="5.3" cy="5.3" r="1" fill="#fff"/><circle cx="10" cy="5.3" r="1" fill="#fff"/><circle cx="11.6" cy="10.6" r=".85" fill="#fff"/><circle cx="16" cy="10.6" r=".85" fill="#fff"/></svg></div>
<div class="side" style="left:1241px;top:647px;width:21px;height:17px"><svg width="21" height="17" viewBox="0 0 21 17"><path d="M8.6 4.6C5 6.1 1 9.3 1 12.1c0 2.8 3.7 4.6 8 4.6 5.2 0 8.7-2.7 8.7-5.3 0-1.7-1.5-2.5-2.6-2.7.6-1.6.2-2.8-2.3-1.6 0-1.9-.8-3.2-4.2-2.5z" fill="#a6a6a6"/><ellipse cx="8.4" cy="12.3" rx="4.8" ry="3.2" fill="#fff"/><ellipse cx="8" cy="12.6" rx="2.4" ry="1.8" fill="#a6a6a6"/><path d="M13.5 1.3a5.8 5.8 0 0 1 5.8 6.3M13.3 4a3 3 0 0 1 3.2 3.3" fill="none" stroke="#a6a6a6" stroke-width="1.5" stroke-linecap="round"/></svg></div>
<div class="side" style="left:1241px;top:683px;width:20px;height:18px"><svg width="20" height="18" viewBox="0 0 20 18"><path d="M10 17V3M3 9.5L10 2.5l7 7" fill="none" stroke="#a6a6a6" stroke-width="2.8"/></svg></div>
</body></html>
